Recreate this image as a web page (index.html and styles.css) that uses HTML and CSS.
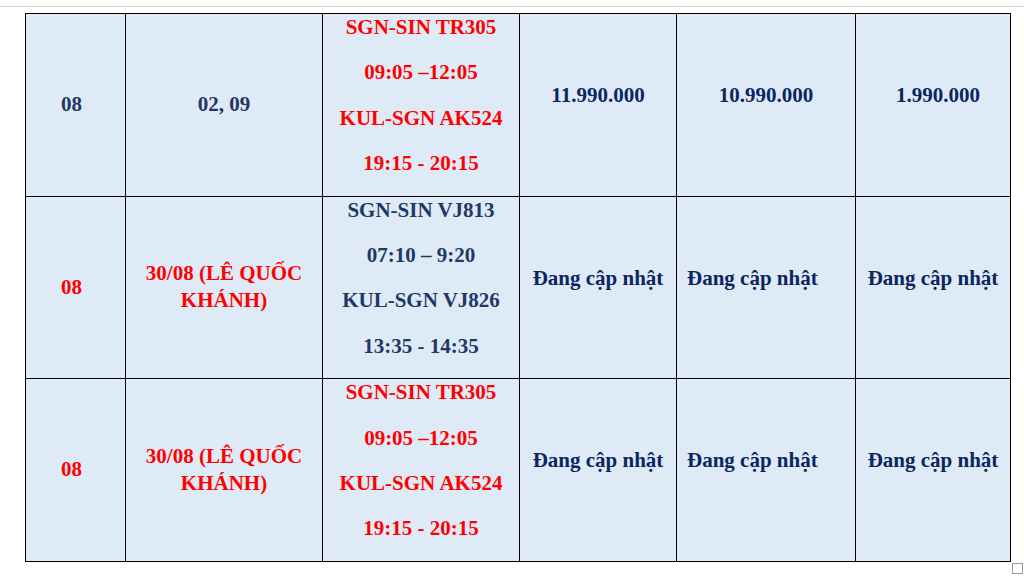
FILE: index.html
```html
<!DOCTYPE html>
<html lang="vi">
<head>
<meta charset="utf-8">
<title>Lịch bay</title>
<link rel="stylesheet" href="styles.css">
</head>
<body>
<div class="ruler"></div>
<div class="page">
  <table class="sched">
    <colgroup>
      <col class="c1"><col class="c2"><col class="c3"><col class="c4"><col class="c5"><col class="c6">
    </colgroup>
    <tr class="r1">
      <td class="navy first"><p class="tight">08</p></td>
      <td class="navy"><p class="tight">02, 09</p></td>
      <td class="red">
        <p class="para">SGN-SIN TR305</p>
        <p class="para">09:05 –12:05</p>
        <p class="para">KUL-SGN AK524</p>
        <p class="para">19:15 - 20:15</p>
      </td>
      <td class="dark"><p class="para">11.990.000</p></td>
      <td class="dark"><p class="para">10.990.000</p></td>
      <td class="dark shift"><p class="para">1.990.000</p></td>
    </tr>
    <tr class="r2">
      <td class="red first"><p class="tight">08</p></td>
      <td class="red"><p class="tight">30/08 (LÊ QUỐC KHÁNH)</p></td>
      <td class="navy">
        <p class="para">SGN-SIN VJ813</p>
        <p class="para">07:10 – 9:20</p>
        <p class="para">KUL-SGN VJ826</p>
        <p class="para">13:35 - 14:35</p>
      </td>
      <td class="dark"><p class="para">Đang cập nhật</p></td>
      <td class="dark left"><p class="para">Đang cập nhật</p></td>
      <td class="dark"><p class="para">Đang cập nhật</p></td>
    </tr>
    <tr class="r3">
      <td class="red first"><p class="tight">08</p></td>
      <td class="red"><p class="tight">30/08 (LÊ QUỐC KHÁNH)</p></td>
      <td class="red">
        <p class="para">SGN-SIN TR305</p>
        <p class="para">09:05 –12:05</p>
        <p class="para">KUL-SGN AK524</p>
        <p class="para">19:15 - 20:15</p>
      </td>
      <td class="dark"><p class="para">Đang cập nhật</p></td>
      <td class="dark left"><p class="para">Đang cập nhật</p></td>
      <td class="dark"><p class="para">Đang cập nhật</p></td>
    </tr>
  </table>
  <div class="handle"></div>
</div>
</body>
</html>
```
FILE: styles.css
```css
html, body {
  margin: 0;
  padding: 0;
  background: #ffffff;
}
body {
  font-family: "Liberation Serif", "Times New Roman", serif;
  font-weight: bold;
  font-size: 21px;
}
.ruler {
  margin-top: 6px;
  height: 0;
  border-top: 1px solid #d2d2d2;
}
.page {
  padding: 6px 0 0 25px;
}
.sched {
  border-collapse: collapse;
  table-layout: fixed;
  width: 986px;
}
.c1 { width: 100px; }
.c2 { width: 197px; }
.c3 { width: 197px; }
.c4 { width: 157px; }
.c5 { width: 179px; }
.c6 { width: 155px; }
.sched td {
  border: 1px solid #000;
  background: #deeaf6;
  text-align: center;
  vertical-align: middle;
  padding: 0 6px;
}
.r1 { height: 182px; }
.r2 { height: 181px; }
.r3 { height: 182px; }
.sched p { margin: 0; }
.para {
  line-height: 26px;
  margin-bottom: 19.4px !important;
}
.tight {
  line-height: 27px;
}
.navy { color: #1f3864; }
.dark { color: #0b2660; }
.red { color: #ff0000; }
.first { padding-right: 14px !important; }
.left { text-align: left !important; padding-left: 10px !important; }
.shift { padding-left: 16px !important; }
.handle {
  margin: 1px 0 0 987px;
  width: 9px;
  height: 9px;
  border: 1px solid #9a9a9a;
  background: #fff;
}
```
